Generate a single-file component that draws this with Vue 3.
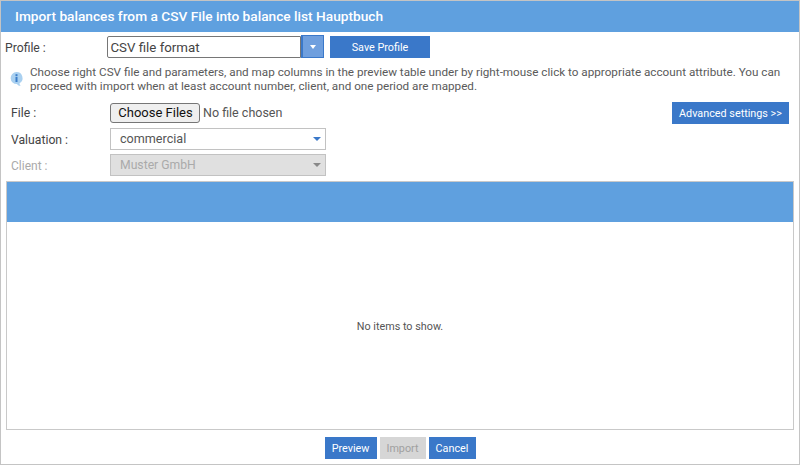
<script setup>
</script>

<template>
  <div class="win">
    <div class="title">Import balances from a CSV File into balance list Hauptbuch</div>
    <div class="row profile">
      <label class="lab">Profile :</label>
      <div class="combo">
        <div class="combo-text">CSV file format</div>
        <div class="combo-btn"><span class="tri white"></span></div>
      </div>
      <button class="btn save">Save Profile</button>
    </div>
    <div class="info">
      <svg class="info-ic" width="15" height="16" viewBox="0 0 15 16">
        <path d="M7.5 1a6 6 0 0 1 3 11.2c0 1 .4 2 1.2 2.8-1.6 0-3-.7-3.8-1.9A6 6 0 1 1 7.5 1z" fill="#a9d0f0"/>
        <rect x="6.5" y="3.2" width="2" height="2" fill="#3a7cc8"/>
        <rect x="6.5" y="6" width="2" height="5" fill="#3a7cc8"/>
      </svg>
      <p>Choose right CSV file and parameters, and map columns in the preview table under by right-mouse click to appropriate account attribute. You can proceed with import when at least account number, client, and one period are mapped.</p>
    </div>
    <div class="row file">
      <label class="lab">File :</label>
      <div class="chooser">
        <button class="choose">Choose Files</button>
        <span class="nofile">No file chosen</span>
      </div>
      <button class="btn adv">Advanced settings &gt;&gt;</button>
    </div>
    <div class="row val">
      <label class="lab">Valuation :</label>
      <div class="sel"><span>commercial</span><i class="tri blue"></i></div>
    </div>
    <div class="row cli">
      <label class="lab dis">Client :</label>
      <div class="sel disabled"><span>Muster GmbH</span><i class="tri gray"></i></div>
    </div>
    <div class="grid">
      <div class="grid-head"></div>
      <div class="grid-body">No items to show.</div>
    </div>
    <div class="foot">
      <button class="btn f1">Preview</button>
      <button class="btn f2" disabled>Import</button>
      <button class="btn f3">Cancel</button>
    </div>
  </div>
</template>

<style>
html, body { margin: 0; padding: 0; background: #fff; }
</style>

<style scoped>
.win {
  box-sizing: border-box;
  width: 800px;
  height: 465px;
  border: 1px solid #c4c4c4;
  background: #fff;
  font-family: Roboto, sans-serif;
  font-size: 12px;
  color: #444;
  display: flex;
  flex-direction: column;
  overflow: hidden;
}
.title {
  height: 31px;
  flex: none;
  background: #5fa0df;
  color: #fff;
  font-size: 13.7px;
  font-weight: 500;
  line-height: 30px;
  padding-left: 14px;
}
.row { display: flex; align-items: center; flex: none; }
.profile { margin-top: 4px; height: 23px; padding-left: 4px; }
.lab { font-size: 12.2px; color: #444; line-height: 22px; }
.profile .lab { width: 102px; }
.combo { display: flex; width: 217px; height: 23px; }
.combo-text {
  box-sizing: border-box;
  width: 194px;
  height: 22px;
  border: 1px solid #767676;
  border-radius: 2px 0 0 2px;
  font-size: 13.3px;
  line-height: 21px;
  padding-left: 2.4px;
  color: #444;
}
.combo-btn {
  box-sizing: border-box;
  width: 23px;
  height: 23px;
  margin-top: -1px;
  background: #6f9fde;
  border: 1px solid #3a78c9;
  border-left-width: 2px;
  display: flex;
  align-items: center;
  justify-content: center;
}
.tri { display: block; width: 0; height: 0; border-style: solid; border-color: transparent; }
.tri.white { border-width: 4px 3px 0; border-top-color: #fff; }
.tri.blue { border-width: 4px 4px 0; border-top-color: #3a78c9; }
.tri.gray { border-width: 4px 4px 0; border-top-color: #888; }
.btn {
  border: 0;
  margin: 0;
  padding: 0;
  background: #3a78c9;
  color: #fff;
  font-family: Roboto, sans-serif;
  font-size: 10.8px;
  height: 22px;
  text-align: center;
}
.save { width: 100px; margin-left: 6px; margin-top: -1px; }
.info { display: flex; margin-top: 6px; padding-left: 8px; padding-right: 8px; flex: none; }
.info-ic { margin-top: 6px; flex: none; }
.info p {
  margin: 0 0 0 6px;
  font-size: 11.7px;
  line-height: 14px;
  color: #5a5a5a;
}
.file { margin-top: 9px; height: 22px; padding-left: 10px; }
.file .lab { width: 99px; }
.chooser { display: flex; align-items: center; flex: 1; }
.choose {
  box-sizing: border-box;
  width: 90px;
  height: 20px;
  padding: 0 0 1px 1px;
  background: #efefef;
  border: 1px solid #767676;
  border-radius: 3px;
  font-family: Roboto, sans-serif;
  font-size: 13px;
  line-height: 16px;
  color: #111;
}
.nofile { font-size: 12.5px; color: #555; margin-left: 3px; margin-top: -1px; }
.adv { width: 117px; margin-right: 10px; }
.val { margin-top: 4px; height: 22px; padding-left: 10px; }
.cli { margin-top: 4px; height: 22px; padding-left: 10px; }
.val .lab, .cli .lab { width: 99px; padding-top: 1px; }
.lab.dis { color: #aaa; font-size: 12px; }
.sel {
  box-sizing: border-box;
  width: 216px;
  height: 22px;
  border: 1px solid #c2c2c2;
  display: flex;
  align-items: center;
  justify-content: space-between;
  padding: 0 4px 2px 9px;
  font-size: 12.6px;
  color: #555;
}
.sel .tri { margin-top: 2px; }
.sel.disabled { background: #e0e0e0; color: #aaa; font-size: 12.2px; padding-bottom: 0; }
.sel.disabled .tri { margin-top: 0; }
.grid {
  box-sizing: border-box;
  margin: 5px 5px 0;
  height: 249px;
  flex: none;
  border: 1px solid #c9c9c9;
  display: flex;
  flex-direction: column;
}
.grid-head { height: 40px; flex: none; background: #5fa0df; }
.grid-body {
  flex: 1;
  display: flex;
  align-items: center;
  justify-content: center;
  padding-top: 2px;
  font-size: 10.8px;
  color: #555;
}
.foot { display: flex; justify-content: center; gap: 3px; margin-top: 7px; flex: none; }
.f1 { width: 52px; }
.f2 { width: 46px; background: #d6d6d6; color: #a0a0a0; }
.f3 { width: 47px; }
</style>
